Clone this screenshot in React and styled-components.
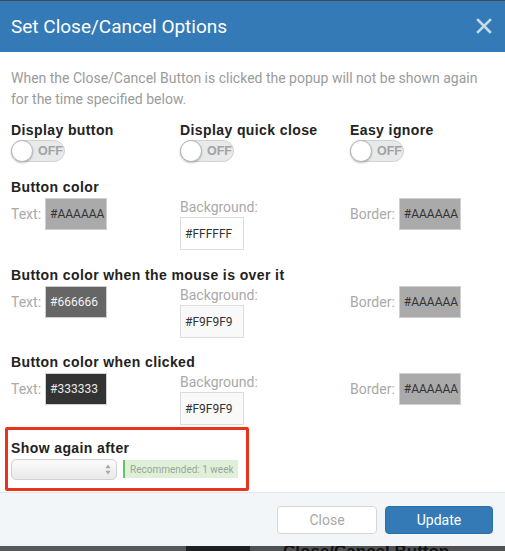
import React from "react";
import styled, { createGlobalStyle } from "styled-components";

const GlobalStyle = createGlobalStyle`
  html, body { margin: 0; padding: 0; }
  body {
    background: #505050;
    font-family: Roboto, "Liberation Sans", Arial, sans-serif;
    -webkit-font-smoothing: antialiased;
  }
  * { box-sizing: border-box; }
`;

const Page = styled.div`
  width: 505px;
  height: 551px;
  overflow: hidden;
  display: flex;
  flex-direction: column;
  background: #505050;
`;

const TopEdge = styled.div`
  height: 1px;
  background: #3e4955;
  flex: none;
`;

const Modal = styled.div`
  display: flex;
  flex-direction: column;
  background: #fff;
  flex: none;
`;

const Header = styled.div`
  height: 51px;
  background: #337ab7;
  display: flex;
  align-items: center;
  justify-content: space-between;
  padding: 0 13px 0 11px;
`;

const Title = styled.h1`
  margin: 0;
  font-family: Roboto, sans-serif;
  font-weight: 400;
  font-size: 19px;
  color: #fff;
  line-height: 24px;
`;

const CloseX = styled.button`
  border: 0;
  background: none;
  padding: 0;
  width: 16px;
  height: 16px;
  display: flex;
  margin-top: -2px;
`;

const Body = styled.div`
  padding: 16px 11px 1px 11px;
  display: flex;
  flex-direction: column;
`;

const Description = styled.p`
  margin: 0;
  font-size: 14px;
  line-height: 21px;
  color: #9b9b9b;
`;

const Heading = styled.div`
  font-family: "Liberation Sans", Arial, Helvetica, sans-serif;
  font-weight: 700;
  font-size: 14px;
  letter-spacing: 0.4px;
  line-height: 20px;
  color: #222;
`;

const Grid3 = styled.div`
  display: grid;
  grid-template-columns: 169px 170px 1fr;
  align-items: start;
  margin-top: ${(p) => p.$mt || 0}px;
`;

const Group = styled.div`
  display: flex;
  flex-direction: column;
`;

const Toggle = styled.div`
  position: relative;
  width: 54px;
  height: 22px;
  border-radius: 11px;
  background: #e8e9ea;
  border: 1px solid #d2d2d2;
  display: flex;
  align-items: center;
  padding-left: 26px;
  font-family: "Liberation Sans", Arial, sans-serif;
  font-weight: 700;
  font-size: 12.5px;
  color: #a3a3a3;
`;

const Knob = styled.span`
  position: absolute;
  left: -1px;
  top: -1px;
  width: 22px;
  height: 22px;
  border-radius: 50%;
  background: #fff;
  border: 1px solid #b8b8b8;
  box-shadow: 0 1px 2px rgba(0, 0, 0, 0.25);
`;

const Section = styled.div`
  display: flex;
  flex-direction: column;
  margin-top: ${(p) => p.$mt || 0}px;
`;

const InlineField = styled.div`
  display: flex;
  align-items: center;
  gap: 4px;
  margin-top: 1px;
`;

const StackField = styled.div`
  display: flex;
  flex-direction: column;
`;

const Label = styled.span`
  font-size: 14px;
  line-height: 20px;
  color: #a9a9a9;
`;

const Swatch = styled.div`
  width: ${(p) => p.$w || 62}px;
  height: ${(p) => p.$h || 32}px;
  border: 1px solid ${(p) => (p.$light ? "#dcdcdc" : "#cfcfcf")};
  background: ${(p) => p.$bg};
  color: ${(p) => p.$fg};
  font-size: 12px;
  display: flex;
  align-items: center;
  padding-left: 4px;
`;

const Highlight = styled.div`
  margin: 2px 0 0 -6px;
  width: 244px;
  border: 3px solid #e8341c;
  border-radius: 2px;
  padding: 8px 3px 8px 3px;
  display: flex;
  flex-direction: column;
`;

const SelectRow = styled.div`
  display: flex;
  align-items: flex-start;
  gap: 6px;
  margin-top: 1px;
`;

const FakeSelect = styled.div`
  width: 106px;
  height: 21px;
  border-radius: 5px;
  border: 1px solid #d0d0d0;
  background: linear-gradient(#fbfbfb, #e9e9e9);
  display: flex;
  align-items: center;
  justify-content: flex-end;
  padding-right: 5px;
`;

const Recommended = styled.div`
  width: 115px;
  height: 18px;
  margin-top: 1px;
  background: #dff0d8;
  border-left: 2px solid #6bbf6b;
  font-size: 10px;
  color: #99a699;
  display: flex;
  align-items: center;
  padding-left: 5px;
  white-space: nowrap;
`;

const Footer = styled.div`
  height: 54px;
  border-top: 1px solid #e3e6e9;
  background: #f3f6f9;
  display: flex;
  align-items: center;
  justify-content: flex-end;
  gap: 8px;
  padding: 0 12px 0 0;
`;

const Btn = styled.button`
  height: 28px;
  width: ${(p) => p.$w}px;
  border-radius: 4px;
  font-family: Roboto, sans-serif;
  font-size: 14px;
  border: 1px solid ${(p) => (p.$primary ? "#2e6fa7" : "#d6d6d6")};
  background: ${(p) => (p.$primary ? "#337ab7" : "#fff")};
  color: ${(p) => (p.$primary ? "#fff" : "#a9a9a9")};
`;

const Backdrop = styled.div`
  flex: 1;
  display: flex;
  overflow: hidden;
  background: #515151;
`;

const Shade = styled.div`
  width: ${(p) => p.$w}px;
  background: ${(p) => p.$bg};
  flex: none;
`;

const BackText = styled.div`
  margin: -4px 0 0 33px;
  font-family: "Liberation Sans", Arial, sans-serif;
  font-weight: 700;
  font-size: 17px;
  line-height: 20px;
  color: #111;
  white-space: nowrap;
`;

const ColorField = ({ label, value, bg, fg, stacked, light }) =>
  stacked ? (
    <StackField>
      <Label>{label}</Label>
      <Swatch $bg={bg} $fg={fg} $light={light} $w={64} $h={33}>
        {value}
      </Swatch>
    </StackField>
  ) : (
    <InlineField>
      <Label>{label}</Label>
      <Swatch $bg={bg} $fg={fg} $light={light}>
        {value}
      </Swatch>
    </InlineField>
  );

const sections = [
  {
    title: "Button color",
    text: ["#AAAAAA", "#aaaaaa", "#333"],
    bg: "#FFFFFF",
    mt: 15,
  },
  {
    title: "Button color when the mouse is over it",
    text: ["#666666", "#666666", "#f2f2f2"],
    bg: "#F9F9F9",
    mt: 15,
  },
  {
    title: "Button color when clicked",
    text: ["#333333", "#333333", "#e8e8e8"],
    bg: "#F9F9F9",
    mt: 14,
  },
];

export default function App() {
  return (
    <>
      <GlobalStyle />
      <Page>
        <TopEdge />
        <Modal>
          <Header>
            <Title>Set Close/Cancel Options</Title>
            <CloseX aria-label="close">
              <svg width="16" height="16" viewBox="0 0 16 16">
                <path
                  d="M2 2 L14 14 M14 2 L2 14"
                  stroke="rgba(255,255,255,0.72)"
                  strokeWidth="2.6"
                  strokeLinecap="square"
                />
              </svg>
            </CloseX>
          </Header>
          <Body>
            <Description>
              When the Close/Cancel Button is clicked the popup will not be shown again
              for the time specified below.
            </Description>
            <Grid3 $mt={10}>
              {["Display button", "Display quick close", "Easy ignore"].map((t) => (
                <Group key={t}>
                  <Heading>{t}</Heading>
                  <Toggle>
                    <Knob />
                    OFF
                  </Toggle>
                </Group>
              ))}
            </Grid3>
            {sections.map((s) => (
              <Section key={s.title} $mt={s.mt}>
                <Heading>{s.title}</Heading>
                <Grid3>
                  <ColorField label="Text:" value={s.text[0]} bg={s.text[1]} fg={s.text[2]} />
                  <ColorField
                    label="Background:"
                    value={s.bg}
                    bg={s.bg.toLowerCase()}
                    fg="#333"
                    stacked
                    light
                  />
                  <ColorField label="Border:" value="#AAAAAA" bg="#aaaaaa" fg="#333" />
                </Grid3>
              </Section>
            ))}
            <Highlight>
              <Heading>Show again after</Heading>
              <SelectRow>
                <FakeSelect>
                  <svg width="6" height="11" viewBox="0 0 6 11">
                    <path d="M3 0.5 L5.6 4.2 L0.4 4.2 Z M3 10.5 L5.6 6.8 L0.4 6.8 Z" fill="#a6a6a6" />
                  </svg>
                </FakeSelect>
                <Recommended>Recommended: 1 week</Recommended>
              </SelectRow>
            </Highlight>
          </Body>
          <Footer>
            <Btn $w={100}>Close</Btn>
            <Btn $w={108} $primary>
              Update
            </Btn>
          </Footer>
        </Modal>
        <Backdrop>
          <Shade $w={186} $bg="#585858" />
          <Shade $w={64} $bg="#1f1f1f" />
          <BackText>Close/Cancel Button</BackText>
        </Backdrop>
      </Page>
    </>
  );
}
